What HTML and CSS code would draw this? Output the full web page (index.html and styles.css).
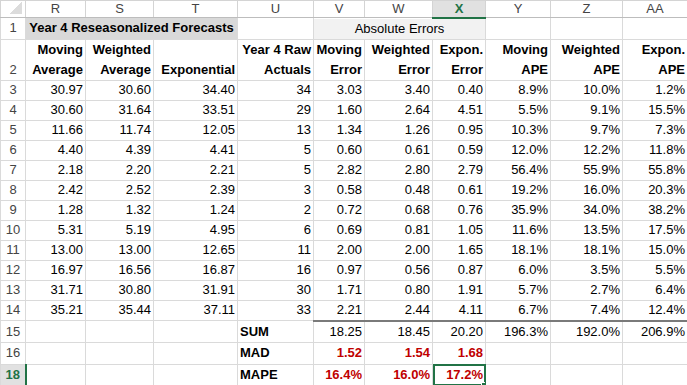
FILE: index.html
```html
<!DOCTYPE html>
<html>
<head>
<meta charset="utf-8">
<link rel="stylesheet" href="styles.css">
</head>
<body>
<table class="sheet">
  <colgroup>
    <col class="w-hd"><col class="w-r"><col class="w-s"><col class="w-t"><col class="w-u"><col class="w-v"><col class="w-w"><col class="w-x"><col class="w-y"><col class="w-z"><col class="w-aa">
  </colgroup>
  <tr class="colhdr">
    <th class="corner"></th><th>R</th><th>S</th><th>T</th><th>U</th><th>V</th><th>W</th><th class="selcol">X</th><th>Y</th><th>Z</th><th>AA</th>
  </tr>
  <tr class="r1">
    <th class="rn">1</th>
    <td colspan="3" class="title">Year 4 Reseasonalized Forecasts</td>
    <td></td>
    <td colspan="3" class="subtitle">Absolute Errors</td>
    <td></td><td></td><td></td>
  </tr>
  <tr class="r2">
    <th class="rn">2</th>
    <td class="h">Moving<br>Average</td>
    <td class="h">Weighted<br>Average</td>
    <td class="h">Exponential</td>
    <td class="h">Year 4 Raw<br>Actuals</td>
    <td class="h">Moving<br>Error</td>
    <td class="h">Weighted<br>Error</td>
    <td class="h">Expon.<br>Error</td>
    <td class="h">Moving<br>APE</td>
    <td class="h">Weighted<br>APE</td>
    <td class="h">Expon.<br>APE</td>
  </tr>
  <tr class="row"><th class="rn">3</th><td class="n">30.97</td><td class="n">30.60</td><td class="n">34.40</td><td class="n">34</td><td class="n">3.03</td><td class="n">3.40</td><td class="n">0.40</td><td class="n">8.9%</td><td class="n">10.0%</td><td class="n">1.2%</td></tr>
  <tr class="row"><th class="rn">4</th><td class="n">30.60</td><td class="n">31.64</td><td class="n">33.51</td><td class="n">29</td><td class="n">1.60</td><td class="n">2.64</td><td class="n">4.51</td><td class="n">5.5%</td><td class="n">9.1%</td><td class="n">15.5%</td></tr>
  <tr class="row"><th class="rn">5</th><td class="n">11.66</td><td class="n">11.74</td><td class="n">12.05</td><td class="n">13</td><td class="n">1.34</td><td class="n">1.26</td><td class="n">0.95</td><td class="n">10.3%</td><td class="n">9.7%</td><td class="n">7.3%</td></tr>
  <tr class="row"><th class="rn">6</th><td class="n">4.40</td><td class="n">4.39</td><td class="n">4.41</td><td class="n">5</td><td class="n">0.60</td><td class="n">0.61</td><td class="n">0.59</td><td class="n">12.0%</td><td class="n">12.2%</td><td class="n">11.8%</td></tr>
  <tr class="row"><th class="rn">7</th><td class="n">2.18</td><td class="n">2.20</td><td class="n">2.21</td><td class="n">5</td><td class="n">2.82</td><td class="n">2.80</td><td class="n">2.79</td><td class="n">56.4%</td><td class="n">55.9%</td><td class="n">55.8%</td></tr>
  <tr class="row"><th class="rn">8</th><td class="n">2.42</td><td class="n">2.52</td><td class="n">2.39</td><td class="n">3</td><td class="n">0.58</td><td class="n">0.48</td><td class="n">0.61</td><td class="n">19.2%</td><td class="n">16.0%</td><td class="n">20.3%</td></tr>
  <tr class="row"><th class="rn">9</th><td class="n">1.28</td><td class="n">1.32</td><td class="n">1.24</td><td class="n">2</td><td class="n">0.72</td><td class="n">0.68</td><td class="n">0.76</td><td class="n">35.9%</td><td class="n">34.0%</td><td class="n">38.2%</td></tr>
  <tr class="row"><th class="rn">10</th><td class="n">5.31</td><td class="n">5.19</td><td class="n">4.95</td><td class="n">6</td><td class="n">0.69</td><td class="n">0.81</td><td class="n">1.05</td><td class="n">11.6%</td><td class="n">13.5%</td><td class="n">17.5%</td></tr>
  <tr class="row"><th class="rn">11</th><td class="n">13.00</td><td class="n">13.00</td><td class="n">12.65</td><td class="n">11</td><td class="n">2.00</td><td class="n">2.00</td><td class="n">1.65</td><td class="n">18.1%</td><td class="n">18.1%</td><td class="n">15.0%</td></tr>
  <tr class="row"><th class="rn">12</th><td class="n">16.97</td><td class="n">16.56</td><td class="n">16.87</td><td class="n">16</td><td class="n">0.97</td><td class="n">0.56</td><td class="n">0.87</td><td class="n">6.0%</td><td class="n">3.5%</td><td class="n">5.5%</td></tr>
  <tr class="row"><th class="rn">13</th><td class="n">31.71</td><td class="n">30.80</td><td class="n">31.91</td><td class="n">30</td><td class="n">1.71</td><td class="n">0.80</td><td class="n">1.91</td><td class="n">5.7%</td><td class="n">2.7%</td><td class="n">6.4%</td></tr>
  <tr class="row last"><th class="rn">14</th><td class="n">35.21</td><td class="n">35.44</td><td class="n">37.11</td><td class="n">33</td><td class="n tot">2.21</td><td class="n tot">2.44</td><td class="n tot">4.11</td><td class="n tot">6.7%</td><td class="n tot">7.4%</td><td class="n tot">12.4%</td></tr>
  <tr class="row r15"><th class="rn">15</th><td></td><td></td><td></td><td class="lbl">SUM</td><td class="n">18.25</td><td class="n">18.45</td><td class="n">20.20</td><td class="n">196.3%</td><td class="n">192.0%</td><td class="n">206.9%</td></tr>
  <tr class="row r16"><th class="rn">16</th><td></td><td></td><td></td><td class="lbl">MAD</td><td class="n red">1.52</td><td class="n red">1.54</td><td class="n red">1.68</td><td></td><td></td><td></td></tr>
  <tr class="row r18"><th class="rn selrow">18</th><td></td><td></td><td></td><td class="lbl">MAPE</td><td class="n red">16.4%</td><td class="n red">16.0%</td><td class="n red active">17.2%<span class="handle"></span></td><td></td><td></td><td></td></tr>
</table>
</body>
</html>
```

FILE: styles.css
```css
html, body {
  margin: 0;
  padding: 0;
  background: #ffffff;
}

.sheet {
  border-collapse: collapse;
  table-layout: fixed;
  width: 687px;
  font-family: "Liberation Sans", Arial, sans-serif;
  font-size: 13px;
  color: #000000;
}

.w-hd { width: 25px; }
.w-r { width: 60px; }
.w-s { width: 68px; }
.w-t { width: 84px; }
.w-u { width: 76px; }
.w-v { width: 51px; }
.w-w { width: 68px; }
.w-x { width: 53px; }
.w-y { width: 65px; }
.w-z { width: 72px; }
.w-aa { width: 65px; }

.sheet td,
.sheet th {
  border: 1px solid #dadada;
  padding: 0 2px 1px 2px;
  white-space: nowrap;
  overflow: hidden;
  vertical-align: bottom;
  line-height: 18px;
  height: auto;
}

.colhdr th {
  font-weight: normal;
  color: #444444;
  text-align: center;
  vertical-align: middle;
  line-height: 16px;
  padding: 0;
  border-color: #d4d4d4;
  border-bottom-color: #bdbdbd;
  background: #ffffff;
}

.colhdr th.corner {
  background: linear-gradient(to bottom right, transparent 50%, #dcdcdc 50%) no-repeat right 3px bottom 3px / 13px 13px;
}

.colhdr th.selcol {
  background: #e1e1e1;
  color: #217346;
  font-weight: bold;
  border-bottom: 2px solid #217346;
  line-height: 15px;
}

.rn {
  font-weight: normal;
  color: #444444;
  text-align: center;
  padding: 0 0 1px 0;
  border-right-color: #bdbdbd;
  background: #ffffff;
}

.rn.selrow {
  background: #e1e1e1;
  color: #217346;
  font-weight: bold;
  border-right: 2px solid #217346;
}

.r1 td,
.r1 th {
  vertical-align: middle;
  line-height: 20px;
  padding-bottom: 0;
}

.title {
  background: #d9d9d9;
  font-weight: bold;
  text-align: center;
  border-color: #d9d9d9;
}

.subtitle {
  background: #f2f2f2;
  text-align: center;
  border-color: #e6e6e6;
}

.r2 td.h {
  font-weight: bold;
  text-align: right;
  line-height: 20px;
  padding-bottom: 0;
}

.r2 th {
  line-height: 19px;
}

.r15 td,
.r15 th {
  line-height: 19px;
}

.r16 td,
.r16 th,
.r18 td,
.r18 th {
  line-height: 20px;
}

.n { text-align: right; }

.lbl {
  font-weight: bold;
  text-align: left;
}

.red {
  color: #c00000;
  font-weight: bold;
}

.row.last td.tot {
  border-bottom: 2px solid #7a7a7a;
}

.active {
  position: relative;
  outline: 2px solid #217346;
  outline-offset: -2px;
  overflow: visible;
}

.handle {
  position: absolute;
  right: -3px;
  bottom: -3px;
  width: 5px;
  height: 5px;
  background: #217346;
  border: 1px solid #ffffff;
}
```
